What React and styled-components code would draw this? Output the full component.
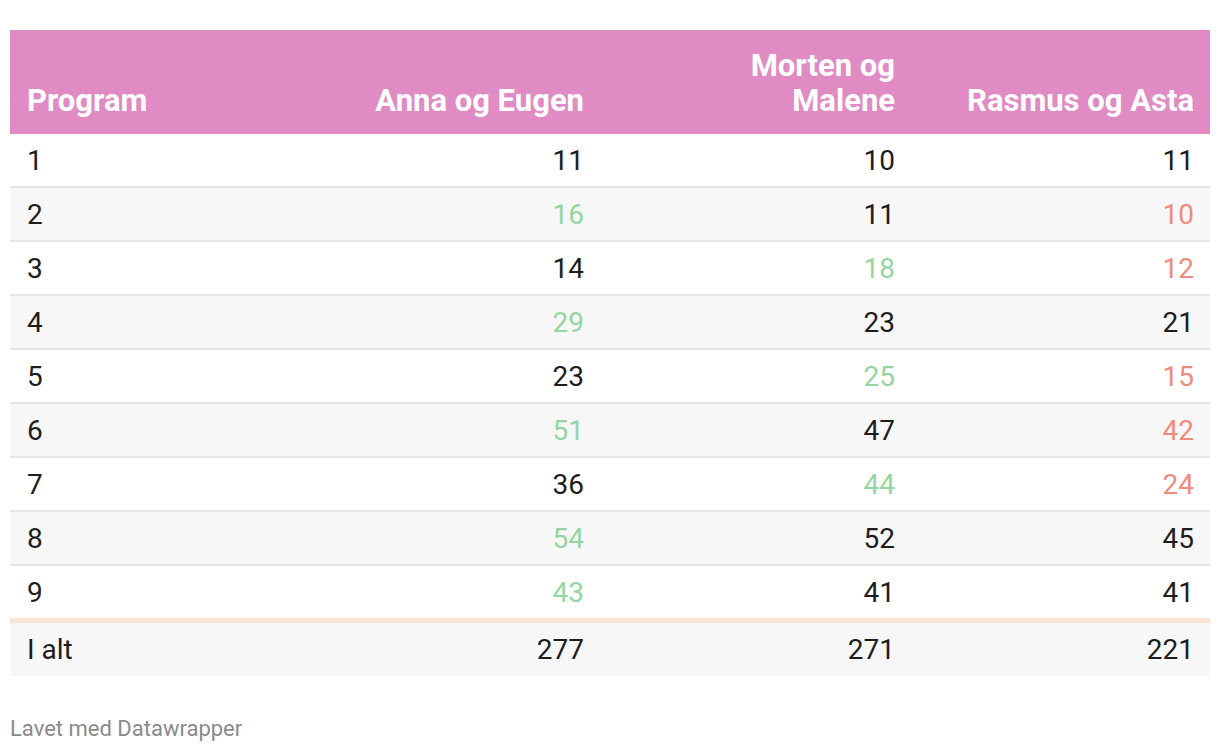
import React from 'react';
import styled, { createGlobalStyle } from 'styled-components';

const GlobalStyle = createGlobalStyle`
  body {
    margin: 0;
    background: #ffffff;
    font-family: Roboto, "Liberation Sans", sans-serif;
  }
`;

const Page = styled.div`
  padding: 30px 10px 0 10px;
`;

const Table = styled.div`
  display: grid;
  grid-template-columns: 290px 300px 311px 299px;
`;

const HeadCell = styled.div`
  background: #e08bc3;
  color: #ffffff;
  font-weight: 700;
  font-size: 31px;
  line-height: 35px;
  padding: 18px 16px 16px 17px;
  display: flex;
  align-items: flex-end;
  justify-content: ${(p) => (p.$left ? 'flex-start' : 'flex-end')};
  text-align: ${(p) => (p.$left ? 'left' : 'right')};
  min-height: 70px;
`;

const Cell = styled.div`
  display: flex;
  align-items: center;
  justify-content: ${(p) => (p.$left ? 'flex-start' : 'flex-end')};
  padding: 0 16px 0 17px;
  font-size: 28px;
  color: ${(p) => p.$color || '#1d1d1d'};
  background: ${(p) => (p.$odd ? '#f7f7f7' : '#ffffff')};
  border-bottom: ${(p) => (p.$last ? '5px solid #fde4d6' : p.$total ? 'none' : '2px solid #e7e7e7')};
  height: ${(p) => (p.$total ? '53px' : '52px')};
`;

const Footer = styled.div`
  margin-top: 40px;
  font-size: 22px;
  color: #8a8a8a;
`;

const GREEN = '#95d6a0';
const RED = '#ef8b7c';

const rows = [
  ['1', ['11'], ['10'], ['11']],
  ['2', ['16', GREEN], ['11'], ['10', RED]],
  ['3', ['14'], ['18', GREEN], ['12', RED]],
  ['4', ['29', GREEN], ['23'], ['21']],
  ['5', ['23'], ['25', GREEN], ['15', RED]],
  ['6', ['51', GREEN], ['47'], ['42', RED]],
  ['7', ['36'], ['44', GREEN], ['24', RED]],
  ['8', ['54', GREEN], ['52'], ['45']],
  ['9', ['43', GREEN], ['41'], ['41']],
];

const App = () => {
  return (
    <Page>
      <GlobalStyle />
      <Table>
        <HeadCell $left>Program</HeadCell>
        <HeadCell>Anna og Eugen</HeadCell>
        <HeadCell>Morten og<br />Malene</HeadCell>
        <HeadCell>Rasmus og Asta</HeadCell>

        {rows.map((r, i) => {
          const odd = i % 2 === 1;
          const last = i === rows.length - 1;
          return (
            <React.Fragment key={r[0]}>
              <Cell $left $odd={odd} $last={last}>{r[0]}</Cell>
              {r.slice(1).map(([v, c], j) => (
                <Cell key={j} $odd={odd} $last={last} $color={c}>{v}</Cell>
              ))}
            </React.Fragment>
          );
        })}

        <Cell $left $odd $total>I alt</Cell>
        <Cell $odd $total>277</Cell>
        <Cell $odd $total>271</Cell>
        <Cell $odd $total>221</Cell>
      </Table>
      <Footer>Lavet med Datawrapper</Footer>
    </Page>
  );
};

export default App;
